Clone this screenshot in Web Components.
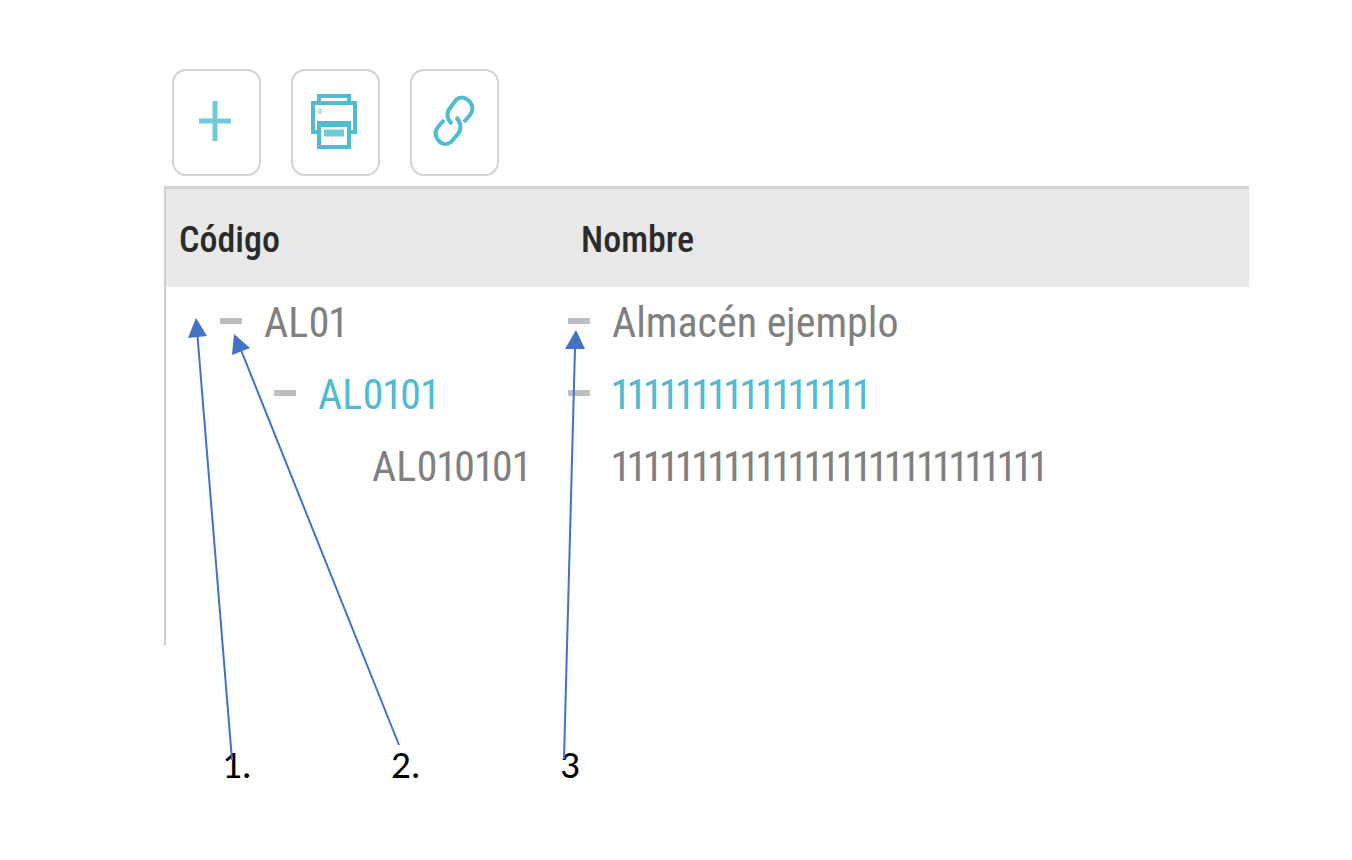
<!DOCTYPE html>
<html lang="es">
<head>
<meta charset="utf-8">
<title>Almacenes</title>
<style>
    body {
        margin: 0;
        background: #fff;
        font-family: "Roboto Condensed", "Roboto", sans-serif;
    }
</style>
</head>
<body>
<warehouse-guide></warehouse-guide>

<script>
// Toolbar button, the icon goes in the slot
class ToolButton extends HTMLElement {
    constructor() {
        super();
        this.attachShadow({ mode: 'open' });
        this.shadowRoot.innerHTML = `
            <style>
                :host {
                    display: block;
                }
                button {
                    display: flex;
                    align-items: center;
                    justify-content: center;
                    box-sizing: border-box;
                    width: 89px;
                    height: 107px;
                    padding: 0 3px 4px 0;
                    background: #fff;
                    border: 2px solid #d3d3d3;
                    border-radius: 14px;
                    color: #4fbccf;
                    cursor: pointer;
                }
            </style>
            <button type="button"><slot></slot></button>
        `;
    }

    connectedCallback() {
        this.shadowRoot.querySelector('button').setAttribute('aria-label', this.getAttribute('label') || '');
    }
}

// One cell of the tree: indent, optional collapse button, text
class TreeCell extends HTMLElement {
    constructor() {
        super();
        this.attachShadow({ mode: 'open' });
        this.shadowRoot.innerHTML = `
            <style>
                :host {
                    display: flex;
                    align-items: center;
                    gap: 22px;
                    height: 72px;
                    padding-bottom: 4px;
                    box-sizing: border-box;
                    white-space: nowrap;
                }
                :host([level="1"]) { padding-left: 54px; }
                :host([level="2"]) { padding-left: 108px; }
                :host([level="3"]) { padding-left: 162px; }
                button {
                    flex: none;
                    width: 22px;
                    height: 22px;
                    padding: 8px 0;
                    border: none;
                    background: #bfbfbf content-box;
                    cursor: pointer;
                }
                span { padding-top: 4px; }
                :host([leaf]) button { visibility: hidden; }
            </style>
            <button type="button" aria-label="Contraer"></button>
            <span><slot></slot></span>
        `;
    }
}

class TreeTable extends HTMLElement {
    constructor() {
        super();
        this.attachShadow({ mode: 'open' });
        this.shadowRoot.innerHTML = `
            <style>
                :host {
                    display: block;
                    min-height: 456px;
                    border-top: 3px solid #d0d0d0;
                    border-left: 2px solid #d0d0d0;
                    font-variant-numeric: proportional-nums;
                }
                table {
                    width: 100%;
                    table-layout: fixed;
                    border-collapse: collapse;
                }
                th {
                    height: 94px;
                    padding: 4px 13px 0;
                    background: #e8e8e8;
                    color: #2b2b2b;
                    font-size: 36px;
                    font-weight: 500;
                    text-align: left;
                }
                th:first-child { width: 376px; }
                td {
                    padding: 0;
                    color: #808080;
                    font-size: 42px;
                    line-height: 48px;
                }
                tr.selected td { color: #4fbccf; }
            </style>
            <table>
                <thead>
                    <tr><th scope="col">Código</th><th scope="col">Nombre</th></tr>
                </thead>
                <tbody></tbody>
            </table>
        `;
    }

    connectedCallback() {
        const rows = [
            { code: 'AL01', name: 'Almacén ejemplo' },
            { code: 'AL0101', name: '1'.repeat(16), selected: true },
            { code: 'AL010101', name: '1'.repeat(27), leaf: true }
        ];
        this.shadowRoot.querySelector('tbody').innerHTML = rows.map((row, i) => `
            <tr class="${row.selected ? 'selected' : ''}">
                <td><tree-cell level="${i + 1}" ${row.leaf ? 'leaf' : ''}>${row.code}</tree-cell></td>
                <td><tree-cell ${row.leaf ? 'leaf' : ''}>${row.name}</tree-cell></td>
            </tr>
        `).join('');
    }
}

// Arrows drawn over the table, from each number to its spot
class CalloutArrows extends HTMLElement {
    constructor() {
        super();
        this.attachShadow({ mode: 'open' });
        this.shadowRoot.innerHTML = `
            <style>
                :host {
                    position: absolute;
                    inset: 0;
                    pointer-events: none;
                }
                svg {
                    display: block;
                    width: 100%;
                    height: 100%;
                }
            </style>
            <svg aria-hidden="true" fill="#4472c4" stroke="none">
                <g stroke="#4472c4" stroke-width="2">
                    <path d="M232 760L197.500 336"/>
                    <path d="M399 745L241 350"/>
                    <path d="M564 759L575 348"/>
                </g>
                <path d="M196 318L207 336L188 338Z"/>
                <path d="M234 334L250 348L232 355Z"/>
                <path d="M576 330L585 349L565 349Z"/>
            </svg>
        `;
    }
}

class WarehouseGuide extends HTMLElement {
    constructor() {
        super();
        this.attachShadow({ mode: 'open' });
        this.shadowRoot.innerHTML = `
            <style>
                :host {
                    display: block;
                    position: relative;
                    box-sizing: border-box;
                    min-height: 100vh;
                    padding: 69px 103px 0 164px;
                }
                nav {
                    display: flex;
                    gap: 30px;
                    padding: 0 8px 10px;
                }
                svg {
                    display: block;
                    overflow: visible;
                }
                ol {
                    display: flex;
                    margin: 0;
                    padding: 99px 0 0 58px;
                    list-style: none;
                    color: #000;
                    font-family: Carlito, Lato, sans-serif;
                    font-size: 39px;
                    line-height: 42px;
                }
                li { width: 169px; }
            </style>
            <nav aria-label="Acciones">
                <tool-button label="Añadir">
                    <svg width="34" height="42" viewBox="0 0 34 42" fill="none" stroke="currentColor" stroke-width="5" opacity=".8">
                        <path d="M17 1V41M1 21H33"/>
                    </svg>
                </tool-button>
                <tool-button label="Imprimir">
                    <svg width="46" height="56" viewBox="0 0 46 56" fill="none" stroke="currentColor" stroke-width="4">
                        <path d="M8 9V3H38V9M7 39H2V10H44V39H39"/>
                        <path d="M8 30H38V54H8Z"/>
                        <path d="M8 31H38" stroke-width="6"/>
                        <path d="M13 40H33" stroke-width="7" opacity=".8"/>
                        <path d="M9 15V21" opacity=".4"/>
                    </svg>
                </tool-button>
                <tool-button label="Enlazar">
                    <svg width="40" height="52" viewBox="0 0 40 52" fill="none" stroke="currentColor" stroke-width="4">
                        <path d="M31 27L37 20C40 16 40 11 37 7C33 2 27 1 23 5L17 13C13 18 14 24 19 29"/>
                        <path d="M11 25L5 32C1 37 2 41 5 45C9 50 14 50 18 47L25 39C29 34 28 27 23 22"/>
                    </svg>
                </tool-button>
            </nav>
            <tree-table></tree-table>
            <ol>
                <li>1.</li>
                <li>2.</li>
                <li>3</li>
            </ol>
            <callout-arrows></callout-arrows>
        `;
    }
}

customElements.define('tool-button', ToolButton);
customElements.define('tree-cell', TreeCell);
customElements.define('tree-table', TreeTable);
customElements.define('callout-arrows', CalloutArrows);
customElements.define('warehouse-guide', WarehouseGuide);
</script>
</body>
</html>
